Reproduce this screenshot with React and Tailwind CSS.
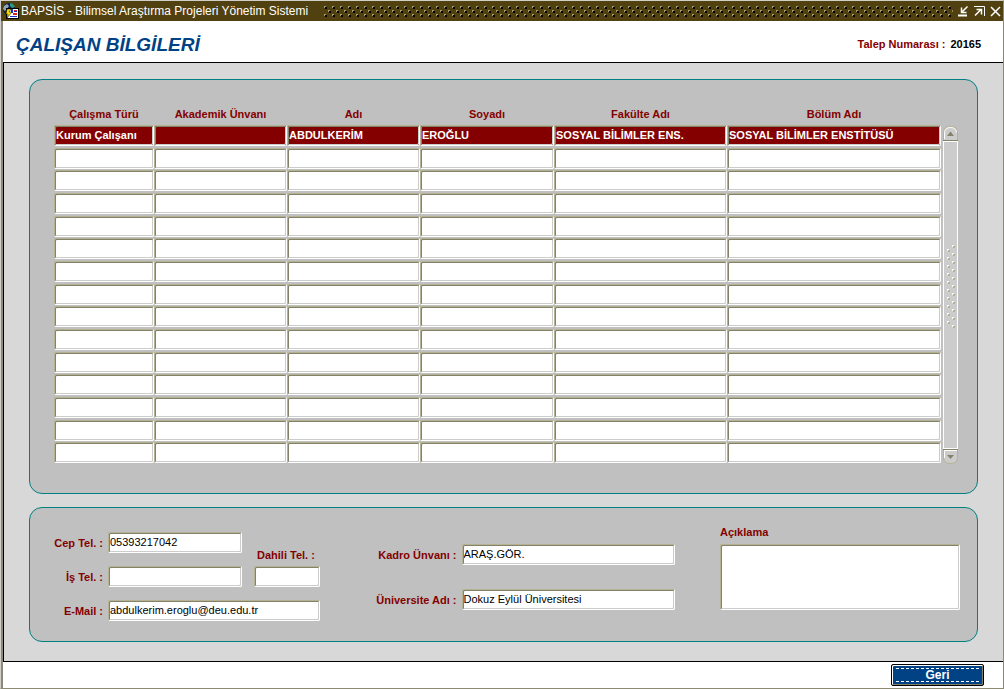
const columns = [
    { title: "Çalışma Türü", width: "w-[100px]" },
    { title: "Akademik Ünvanı", width: "w-[133px]" },
    { title: "Adı", width: "w-[133px]" },
    { title: "Soyadı", width: "w-[134px]" },
    { title: "Fakülte Adı", width: "w-[173px]" },
    { title: "Bölüm Adı", width: "w-[214px]" },
];

const staff = [
    ["Kurum Çalışanı", "", "ABDULKERİM", "EROĞLU", "SOSYAL BİLİMLER ENS.", "SOSYAL BİLİMLER ENSTİTÜSÜ"],
];

const ROW_COUNT = 15;

const bevel =
    "block border border-t-[#b5b294] border-l-[#b5b294] border-r-white border-b-white rounded-[2px] shadow-[inset_1px_1px_0_#84826b,inset_-1px_-1px_0_#cccccc] outline-none";

export default function App() {
    return (
        <div className="min-h-screen flex flex-col border-t border-t-[#d0d0c8] border-l border-l-[#cfcfcf] border-r border-r-[#8c8a73] border-b border-b-[#8c8a73] bg-white font-['Liberation_Sans',Arial,sans-serif] text-[11px] leading-4 text-black">
            <TitleBar />
            <div className="flex-1 flex flex-col border-l-2 border-[#8c8a73]">
                <header className="h-[41px] flex items-center justify-between pl-[13px] pr-[22px]">
                    <h1 className="text-[19px] leading-6 pt-[6px] font-bold italic text-[#004284]">
                        ÇALIŞAN BİLGİLERİ
                    </h1>
                    <p className="flex gap-[5px] pt-[5px] font-bold">
                        <span className="text-[#840000]">Talep Numarası :</span>
                        <span>20165</span>
                    </p>
                </header>

                <main className="flex-1 flex flex-col gap-[13px] border-y border-l border-black bg-[#d8d8d8] px-[25px] pt-4 pb-[19px]">
                    <StaffPanel />
                    <ContactPanel />
                </main>

                <footer className="h-[26px] flex items-start justify-end pt-[2px] pr-[19px]">
                    <button
                        type="button"
                        className="w-[93px] h-[22px] px-1 py-[3px] rounded-[2px] border border-black bg-[#004284] text-white text-[12px] font-bold shadow-[inset_1px_1px_0_#fff,inset_-1px_-1px_0_#84826b]"
                    >
                        <span className="flex h-full items-center justify-center border-y border-dashed border-white leading-3">
                            Geri
                        </span>
                    </button>
                </footer>
            </div>
        </div>
    );
}

/* ---- Window title bar ---- */
function TitleBar() {
    return (
        <div className="h-5 flex items-center bg-[#524110] text-white">
            <AppIcon />
            <span className="ml-[2px] text-[12px]">
                BAPSİS - Bilimsel Araştırma Projeleri Yönetim Sistemi
            </span>
            <svg className="ml-4 mt-px h-[11px] flex-1" aria-hidden="true">
                <defs>
                    <pattern id="studs" width="8" height="8" patternUnits="userSpaceOnUse">
                        <path d="M1 1h2v2h-2zM5 5h2v2h-2z" fill="#000" />
                        <path d="M0 0h2v1h-1v1h-1zM4 4h2v1h-1v1h-1z" fill="#a59c73" />
                    </pattern>
                </defs>
                <rect width="100%" height="11" fill="url(#studs)" />
            </svg>
            <div className="flex items-center gap-[5px] ml-[5px] mr-[2px]">
                <button type="button" aria-label="Küçült">
                    <svg className="block" width="11" height="11" fill="none" stroke="#fff">
                        <path d="M9.500 .5L4 6M3.500 1.500v5h5" strokeWidth="1.500" />
                        <path d="M0 9.500h9" strokeWidth="2" />
                    </svg>
                </button>
                <button type="button" aria-label="Büyüt">
                    <svg className="block" width="11" height="11" fill="none" stroke="#fff">
                        <path d="M0 .5h10.500V10" />
                        <path d="M1 9.500L7 3.500M2.500 3.500h5v5" strokeWidth="1.500" />
                    </svg>
                </button>
                <button type="button" aria-label="Kapat">
                    <svg className="block" width="11" height="11" fill="none" stroke="#fff">
                        <path d="M1 1l9 9M10 1l-9 9" strokeWidth="1.500" />
                    </svg>
                </button>
            </div>
        </div>
    );
}

function AppIcon() {
    return (
        <svg className="ml-[2px]" width="16" height="16" aria-hidden="true">
            <circle cx="6" cy="6" r="6" fill="#101c50" />
            <path d="M0 6L1 3l3-2 2 2-2 3-2 2z" fill="#8ca8b8" />
            <path d="M7 0l3 1 2 3-3 1-2-2z" fill="#2c9c84" />
            <path d="M3 5h13v11H3z" fill="#000" />
            <path d="M4 6h11v9H4z" fill="#fff" />
            <path d="M8 6h2v4H8zM7 13h7v1H7z" fill="#1830c8" />
            <path d="M11 7h3v1h-3zM10 10h4v2h-4z" fill="#e02020" />
            <path d="M11 8h3v1h-3z" fill="#1830c8" />
            <path d="M4 6h4L6 9h3l-5 6 1-4H3z" fill="#f8e000" stroke="#000" strokeWidth=".5" />
        </svg>
    );
}

/* ---- Staff list ---- */
function StaffPanel() {
    const rows = Array.from({ length: ROW_COUNT }, (_, i) => staff[i] || columns.map(() => ""));

    return (
        <section className="flex gap-[2px] rounded-[13px] border border-[#008080] bg-[#c0c0c0] pt-[26px] pr-[19px] pb-7 pl-6">
            <table className="flex-1 h-[359px] table-fixed border-collapse">
                <thead>
                    <tr>
                        {columns.map((col) => (
                            <th key={col.title} className={`${col.width} h-[19px] p-0 align-top font-bold text-[#840000]`}>
                                {col.title}
                            </th>
                        ))}
                    </tr>
                </thead>
                <tbody>
                    {rows.map((row, r) => (
                        <tr key={r}>
                            {row.map((value, c) => (
                                <td key={c} className="p-0 align-top">
                                    <input
                                        type="text"
                                        aria-label={columns[c].title}
                                        defaultValue={value}
                                        className={`${bevel} w-full h-[21px] px-px pb-[2px] font-bold ${r === 0 ? "bg-[#840000] text-white" : "bg-white"}`}
                                    />
                                </td>
                            ))}
                        </tr>
                    ))}
                </tbody>
            </table>
            <ScrollBar />
        </section>
    );
}

function ScrollBar() {
    return (
        <div className="w-[15px] mt-5 mb-px flex flex-col">
            <button type="button" aria-label="Yukarı">
                <svg className="block" width="15" height="15">
                    <path d="M.5 14.500V6.500Q.5 .5 7.500 .5T14.500 6.500V14.500Z" fill="#ccc" stroke="#b5b294" />
                    <path d="M1.500 13V6.500Q2 1.500 7.500 1.500T13.500 6.500" fill="none" stroke="#fff" />
                    <path d="M0 14.500h15" stroke="#84826b" />
                    <path d="M4 10L7.500 5.500L11 10z" fill="#84826b" />
                </svg>
            </button>
            <div className="flex-1 flex items-center justify-center border border-white bg-[#ccc] pb-[17px]">
                <svg width="8" height="84" aria-hidden="true">
                    <defs>
                        <pattern id="grip" width="8" height="8" patternUnits="userSpaceOnUse">
                            <path d="M6 1h2v2h-2zM1 5h2v2h-2z" fill="#b5b294" />
                            <path d="M5 0h2v1h-1v1h-1zM0 4h2v1h-1v1h-1z" fill="#fff" />
                        </pattern>
                    </defs>
                    <rect width="8" height="84" fill="url(#grip)" />
                </svg>
            </div>
            <button type="button" aria-label="Aşağı">
                <svg className="block" width="15" height="15">
                    <path d="M.5 .5V8.500Q.5 14.500 7.500 14.500T14.500 8.500V.5Z" fill="#ccc" stroke="#b5b294" />
                    <path d="M0 .5h15" stroke="#84826b" />
                    <path d="M1 1.500h13M1.500 1v8" stroke="#fff" />
                    <path d="M4 6L7.500 10L11 6z" fill="#84826b" />
                </svg>
            </button>
        </div>
    );
}

/* ---- Contact details of the selected person ---- */
function ContactPanel() {
    return (
        <section className="flex-1 flex justify-between rounded-[13px] border border-[#008080] bg-[#c0c0c0] pt-4 pr-[17px] pb-5 pl-[19px]">
            <div className="flex flex-col gap-[13px] pt-2">
                <div className="flex items-end gap-3">
                    <div className="flex flex-col gap-[13px]">
                        <Field id="cep" label="Cep Tel. :" value="05393217042" labelWidth="w-[54px]" width="w-[134px]" />
                        <Field id="is" label="İş Tel. :" labelWidth="w-[54px]" width="w-[134px]" />
                    </div>
                    <div className="flex flex-col gap-[3px]">
                        <label htmlFor="dahili" className="pl-[3px] font-bold text-[#840000]">
                            Dahili Tel. :
                        </label>
                        <input id="dahili" type="text" className={`${bevel} w-[66px] h-[21px] bg-white px-px`} />
                    </div>
                </div>
                <Field id="email" label="E-Mail :" value="abdulkerim.eroglu@deu.edu.tr" labelWidth="w-[54px]" width="w-[212px]" />
            </div>

            <div className="flex flex-col gap-6 pt-5">
                <Field id="kadro" label="Kadro Ünvanı :" value="ARAŞ.GÖR." labelWidth="w-[91px]" width="w-[213px]" />
                <Field id="uni" label="Üniversite Adı :" value="Dokuz Eylül Üniversitesi" labelWidth="w-[91px]" width="w-[213px]" />
            </div>

            <div className="flex flex-col">
                <label htmlFor="aciklama" className="h-5 font-bold text-[#840000]">
                    Açıklama
                </label>
                <textarea id="aciklama" className={`${bevel} w-60 h-[66px] resize-none bg-white px-px`} />
            </div>
        </section>
    );
}

function Field({ id, label, value = "", labelWidth, width }) {
    return (
        <div className="flex items-center gap-[5px]">
            <label htmlFor={id} className={`${labelWidth} shrink-0 text-right font-bold whitespace-nowrap text-[#840000]`}>
                {label}
            </label>
            <input id={id} type="text" defaultValue={value} className={`${bevel} ${width} h-[21px] bg-white px-px pb-[2px]`} />
        </div>
    );
}
